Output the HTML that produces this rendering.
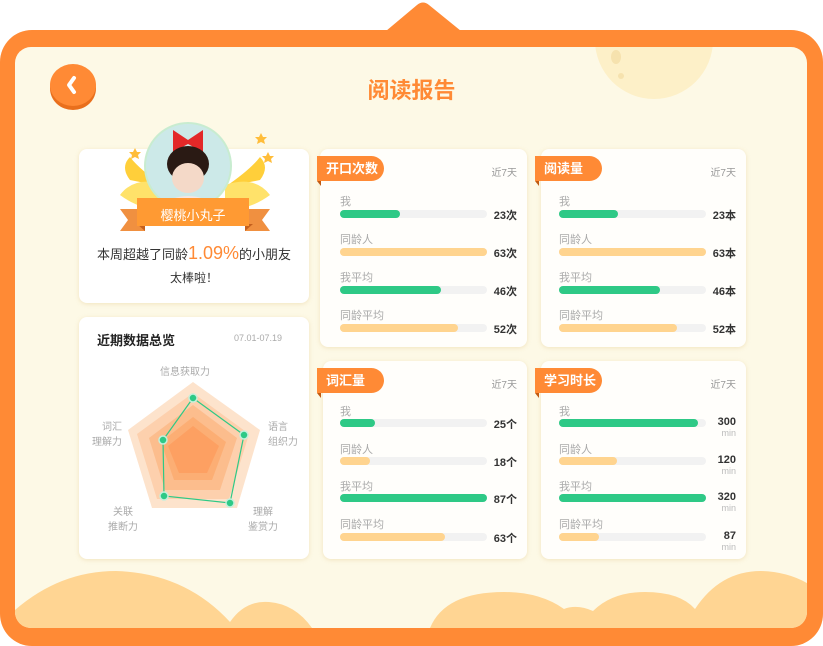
<!DOCTYPE html>
<html><head><meta charset="utf-8"><style>
*{margin:0;padding:0;box-sizing:border-box}
body{width:823px;height:646px;overflow:hidden;background:#fff;position:relative;font-family:"Liberation Sans","Noto Sans CJK SC",sans-serif}
.abs{position:absolute}
.card{position:absolute;background:#fffefb;border-radius:8px;box-shadow:0 1px 4px rgba(220,190,120,.35)}
.tag{position:absolute;left:-3px;top:7px;width:67px;height:25px;background:#ff8a35;color:#fff;font-size:13px;line-height:25px;padding-left:9px;border-radius:0 13px 13px 0;font-weight:bold}
.tag:after{content:"";position:absolute;left:0;top:25px;border-top:5px solid #c05a12;border-left:4px solid transparent}
.d7{position:absolute;right:10px;top:15px;font-size:10px;color:#999}
.lb{position:absolute;font-size:11px;color:#aaa}
.tr{position:absolute;height:8px;border-radius:4px;background:#f2f2f2}
.f{height:8px;border-radius:4px}
.g{background:#2ec986}.y{background:#ffd48f}
.v{position:absolute;font-size:11px;color:#333;font-weight:bold;text-align:right}
.mn{position:absolute;font-size:9px;color:#bbb;text-align:right}
</style></head><body>
<svg class="abs" style="left:0;top:0" width="823" height="646">
<path d="M386 31 L417 5 Q423 0 429 5 L461 31 Z" fill="#ff8a35"/>
<rect x="0" y="30" width="823" height="616" rx="32" fill="#ff8a35"/>
<rect x="15" y="47" width="792" height="581" rx="16" fill="#fdf9e6"/>
<clipPath id="c"><rect x="15" y="47" width="792" height="581" rx="16"/></clipPath>
<g clip-path="url(#c)">
<circle cx="654" cy="40" r="59" fill="#fdf0c8"/>
<ellipse cx="616" cy="57" rx="5" ry="7" fill="#f6e2ae"/>
<circle cx="621" cy="76" r="3" fill="#f6e2ae"/>
<g fill="#ffd593">
<path d="M15 610 Q60 571 116 571 Q185 573 230 622 Q245 600 269 602 Q295 604 312 628 L15 628Z"/>
<path d="M430 628 Q445 592 504 592 Q540 592 564 609 Q577 604 593 611 Q612 592 645 592 Q680 592 695 609 Q720 571 761 571 Q790 572 810 585 L810 628Z"/>
</g>
</g>
</svg>
<div class="abs" style="left:50px;top:67px;width:46px;height:43px;border-radius:50%;background:#e96f1c"></div>
<div class="abs" style="left:50px;top:64px;width:46px;height:42px;border-radius:50%;background:#ff8a35"></div>
<svg class="abs" style="left:64px;top:75px" width="16" height="20"><path d="M10 3 L5 10 L10 17" stroke="#fff" stroke-width="4" fill="none" stroke-linecap="round" stroke-linejoin="round"/></svg>
<div class="abs" style="left:0;width:823px;top:73px;text-align:center;font-size:22px;color:#ff8a35;font-weight:bold">阅读报告</div>

<div class="card" style="left:79px;top:149px;width:230px;height:154px;background:#fff"></div>
<svg class="abs" style="left:110px;top:120px" width="170" height="112">
<path d="M20 60 Q10 47 20 37 Q30 50 55 67 Z" fill="#ffcf3a"/>
<path d="M10 75 Q25 55 55 65 L55 90 Q30 90 10 75Z" fill="#ffe26a"/>
<path d="M150 60 Q160 47 150 37 Q140 50 115 67 Z" fill="#ffcf3a"/>
<path d="M160 75 Q145 55 115 65 L115 90 Q140 90 160 75Z" fill="#ffe26a"/>
<circle cx="78" cy="46" r="43" fill="#cce9e8" stroke="#c8ecd0" stroke-width="2"/>
<path d="M63 10 L78 20 L93 10 L93 32 L78 24 L63 32Z" fill="#e32828"/>
<ellipse cx="78" cy="44" rx="21" ry="18" fill="#2a1a14"/>
<ellipse cx="78" cy="58" rx="16" ry="15" fill="#f4d9c8"/>
<path d="M45 88 Q78 64 111 88Z" fill="#f5e6e0"/>
<path d="M25 28 l2 4 4 0 -3 3 1 4 -4 -2 -4 2 1 -4 -3 -3 4 0z" fill="#ffbd3a"/>
<path d="M151 13 l2 4 4 0 -3 3 1 4 -4 -2 -4 2 1 -4 -3 -3 4 0z" fill="#ffbd3a"/>
<path d="M158 32 l2 4 4 0 -3 3 1 4 -4 -2 -4 2 1 -4 -3 -3 4 0z" fill="#ffbd3a"/>
<path d="M10 89 L35 89 L35 111 L10 111 L18 100Z" fill="#f09040"/>
<path d="M160 89 L135 89 L135 111 L160 111 L152 100Z" fill="#f09040"/>
<path d="M27 104 L35 111 L35 104Z" fill="#c4601e"/>
<path d="M143 104 L135 111 L135 104Z" fill="#c4601e"/>
<rect x="27" y="78" width="112" height="28" fill="#ff9a33"/>
</svg>
<div class="abs" style="left:137px;top:205px;width:112px;text-align:center;color:#fff;font-size:13px">樱桃小丸子</div>
<div class="abs" style="left:79px;top:243px;width:230px;text-align:center;font-size:13px;color:#333">本周超越了同龄<span style="color:#ff8a35;font-size:18px">1.09%</span>的小朋友</div>
<div class="abs" style="left:79px;top:269px;width:230px;text-align:center;font-size:12px;color:#333">太棒啦！</div>

<div class="card" style="left:79px;top:317px;width:230px;height:242px;background:#fff"></div>
<div class="abs" style="left:97px;top:330px;font-size:13px;font-weight:bold;color:#222">近期数据总览</div>
<div class="abs" style="left:234px;top:333px;font-size:9px;color:#aaa">07.01-07.19</div>
<svg class="abs" style="left:79px;top:317px" width="230" height="242">
<polygon points="114,65 181,113 158,191 73,191 49,113" fill="#fde3cc"/>
<polygon points="114,76 170,117 150,182 78,182 58,117" fill="#fdd0ad"/>
<polygon points="114,88 158,121 141,173 86,173 70,121" fill="#fcbd8d"/>
<polygon points="114,100 147,125 133,163 95,163 82,125" fill="#fcae74"/>
<polygon points="114,109 140,129 128,156 100,156 89,129" fill="#fda062"/>
<polygon points="114,81 165,118 151,186 85,179 84,123" fill="none" stroke="#2ec986" stroke-width="1.2"/>
<g fill="#2ec986" stroke="#c4f0dc" stroke-width="1.5">
<circle cx="114" cy="81" r="4"/><circle cx="165" cy="118" r="4"/><circle cx="151" cy="186" r="4"/><circle cx="85" cy="179" r="4"/><circle cx="84" cy="123" r="4"/></g>
</svg>
<div class="abs" style="left:160px;top:363px;font-size:10px;color:#aaa">信息获取力</div>
<div class="abs" style="left:268px;top:420px;font-size:10px;color:#aaa;line-height:15px">语言<br>组织力</div>
<div class="abs" style="left:92px;top:420px;font-size:10px;color:#aaa;line-height:15px;text-align:right">词汇<br>理解力</div>
<div class="abs" style="left:108px;top:505px;font-size:10px;color:#aaa;line-height:15px;text-align:center">关联<br>推断力</div>
<div class="abs" style="left:248px;top:505px;font-size:10px;color:#aaa;line-height:15px;text-align:center">理解<br>鉴赏力</div>

<div class="card" style="left:320px;top:149px;width:207px;height:198px">
<div class="tag">开口次数</div><div class="d7">近7天</div>
<div class="lb" style="left:20px;top:44px">我</div><div class="tr" style="left:20px;top:61px;width:147px"><div class="f g" style="width:60px"></div></div><div class="v" style="right:10px;top:58px">23次</div>
<div class="lb" style="left:20px;top:82px">同龄人</div><div class="tr" style="left:20px;top:99px;width:147px"><div class="f y" style="width:147px"></div></div><div class="v" style="right:10px;top:96px">63次</div>
<div class="lb" style="left:20px;top:120px">我平均</div><div class="tr" style="left:20px;top:137px;width:147px"><div class="f g" style="width:101px"></div></div><div class="v" style="right:10px;top:134px">46次</div>
<div class="lb" style="left:20px;top:158px">同龄平均</div><div class="tr" style="left:20px;top:175px;width:147px"><div class="f y" style="width:118px"></div></div><div class="v" style="right:10px;top:172px">52次</div>
</div>
<div class="card" style="left:541px;top:149px;width:205px;height:198px">
<div class="tag" style="left:-6px">阅读量</div><div class="d7">近7天</div>
<div class="lb" style="left:18px;top:44px">我</div><div class="tr" style="left:18px;top:61px;width:147px"><div class="f g" style="width:59px"></div></div><div class="v" style="right:10px;top:58px">23本</div>
<div class="lb" style="left:18px;top:82px">同龄人</div><div class="tr" style="left:18px;top:99px;width:147px"><div class="f y" style="width:147px"></div></div><div class="v" style="right:10px;top:96px">63本</div>
<div class="lb" style="left:18px;top:120px">我平均</div><div class="tr" style="left:18px;top:137px;width:147px"><div class="f g" style="width:101px"></div></div><div class="v" style="right:10px;top:134px">46本</div>
<div class="lb" style="left:18px;top:158px">同龄平均</div><div class="tr" style="left:18px;top:175px;width:147px"><div class="f y" style="width:118px"></div></div><div class="v" style="right:10px;top:172px">52本</div>
</div>
<div class="card" style="left:323px;top:361px;width:204px;height:198px">
<div class="tag" style="left:-6px">词汇量</div><div class="d7">近7天</div>
<div class="lb" style="left:17px;top:42px">我</div><div class="tr" style="left:17px;top:58px;width:147px"><div class="f g" style="width:35px"></div></div><div class="v" style="right:10px;top:55px">25个</div>
<div class="lb" style="left:17px;top:80px">同龄人</div><div class="tr" style="left:17px;top:96px;width:147px"><div class="f y" style="width:30px"></div></div><div class="v" style="right:10px;top:93px">18个</div>
<div class="lb" style="left:17px;top:117px">我平均</div><div class="tr" style="left:17px;top:133px;width:147px"><div class="f g" style="width:147px"></div></div><div class="v" style="right:10px;top:130px">87个</div>
<div class="lb" style="left:17px;top:155px">同龄平均</div><div class="tr" style="left:17px;top:172px;width:147px"><div class="f y" style="width:105px"></div></div><div class="v" style="right:10px;top:169px">63个</div>
</div>
<div class="card" style="left:541px;top:361px;width:205px;height:198px">
<div class="tag" style="left:-6px">学习时长</div><div class="d7">近7天</div>
<div class="lb" style="left:18px;top:42px">我</div><div class="tr" style="left:18px;top:58px;width:147px"><div class="f g" style="width:139px"></div></div><div class="v" style="right:10px;top:55px">300</div><div class="mn" style="right:10px;top:67px">min</div>
<div class="lb" style="left:18px;top:80px">同龄人</div><div class="tr" style="left:18px;top:96px;width:147px"><div class="f y" style="width:58px"></div></div><div class="v" style="right:10px;top:93px">120</div><div class="mn" style="right:10px;top:105px">min</div>
<div class="lb" style="left:18px;top:117px">我平均</div><div class="tr" style="left:18px;top:133px;width:147px"><div class="f g" style="width:147px"></div></div><div class="v" style="right:10px;top:130px">320</div><div class="mn" style="right:10px;top:142px">min</div>
<div class="lb" style="left:18px;top:155px">同龄平均</div><div class="tr" style="left:18px;top:172px;width:147px"><div class="f y" style="width:40px"></div></div><div class="v" style="right:10px;top:169px">87</div><div class="mn" style="right:10px;top:181px">min</div>
</div>
</body></html>
